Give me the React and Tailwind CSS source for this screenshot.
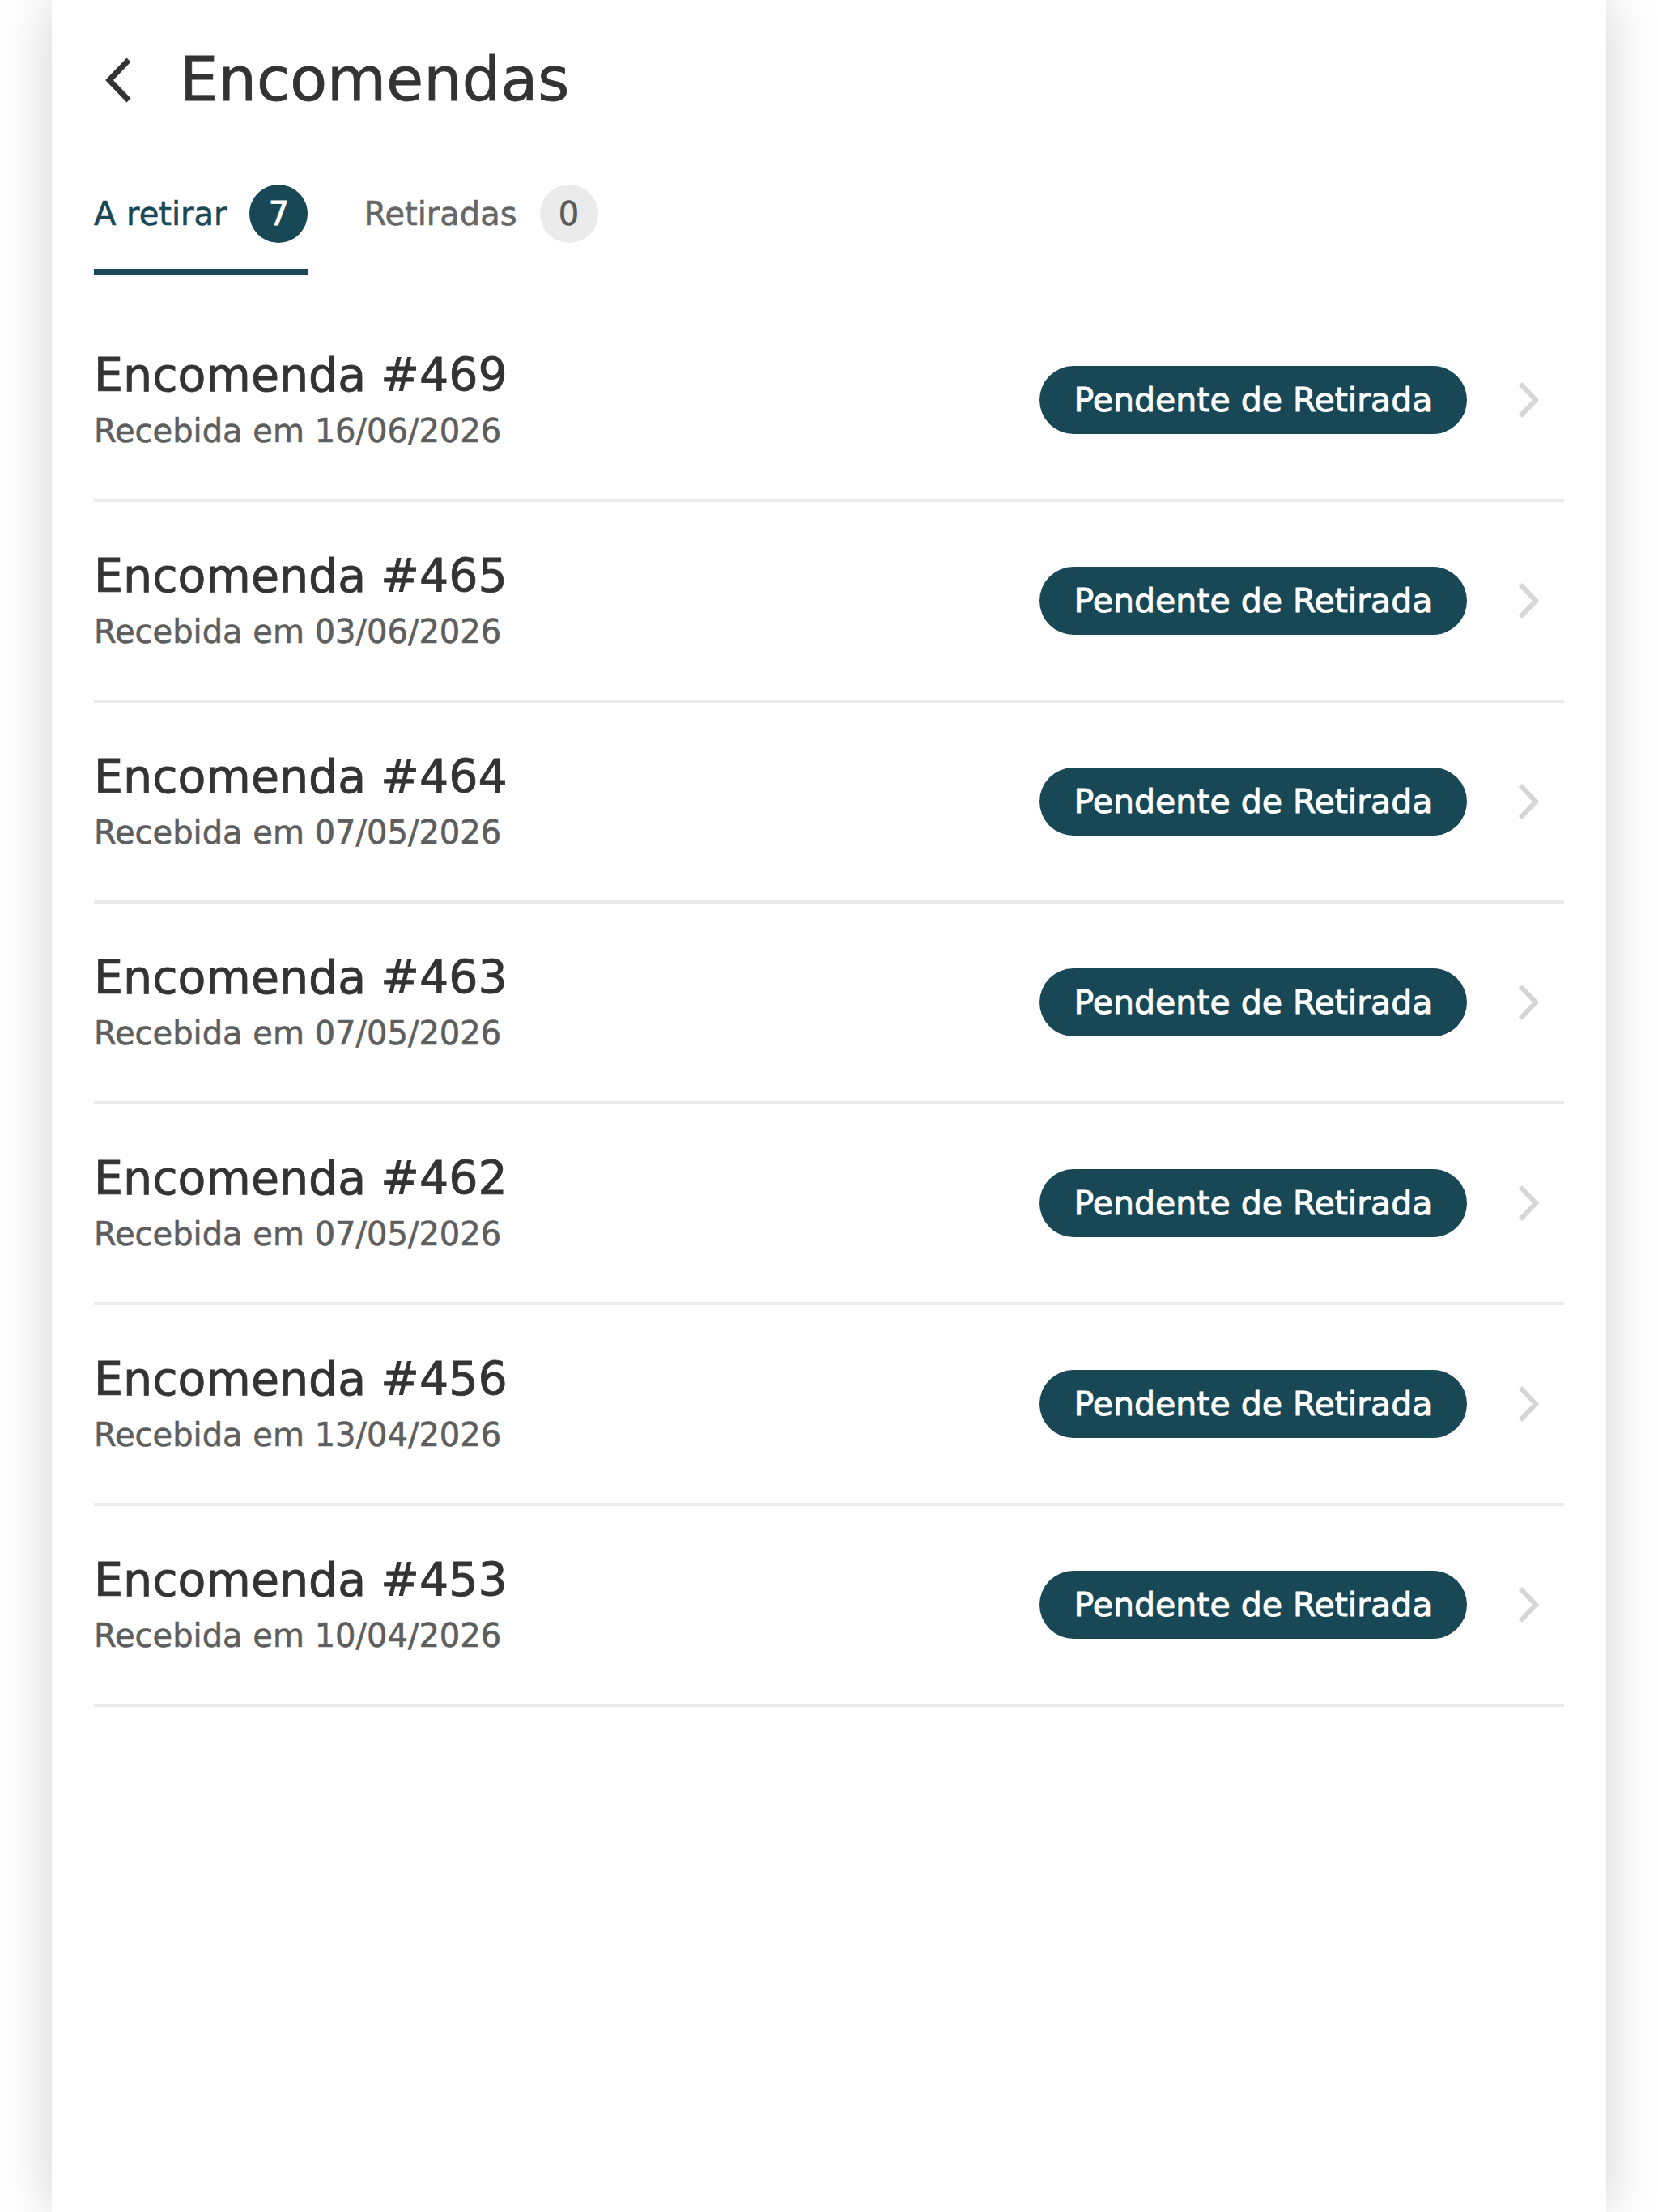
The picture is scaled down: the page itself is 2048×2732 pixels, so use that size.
import React from "react";

const orders = [
  { id: 469, date: "16/06/2026" },
  { id: 465, date: "03/06/2026" },
  { id: 464, date: "07/05/2026" },
  { id: 463, date: "07/05/2026" },
  { id: 462, date: "07/05/2026" },
  { id: 456, date: "13/04/2026" },
  { id: 453, date: "10/04/2026" },
];

const BackIcon = () => (
  <svg width="48" height="64" viewBox="0 0 48 64" fill="none">
    <polyline
      points="43,7 19,32 43,57"
      stroke="#333333"
      strokeWidth="7"
      strokeLinejoin="miter"
    />
  </svg>
);

const ChevronRight = () => (
  <svg width="32" height="48" viewBox="0 0 32 48" fill="none">
    <polyline
      points="6,4 25,24 6,44"
      stroke="#d6d6d6"
      strokeWidth="6"
      strokeLinejoin="miter"
    />
  </svg>
);

const OrderRow = ({ id, date }) => (
  <div className="h-[248px] flex items-center border-b-4 border-[#ebebeb]">
    <div className="flex-1 min-w-0 pb-[4px]">
      <p className="text-[57px] leading-[68px] text-[#333333] [-webkit-text-stroke:0.8px_#333333]">
        Encomenda #{id}
      </p>
      <p className="mt-[11px] text-[40px] leading-[48px] text-[#5e5e5e] [-webkit-text-stroke:0.6px_#5e5e5e]">
        Recebida em {date}
      </p>
    </div>
    <span className="w-[528px] h-[84px] rounded-full bg-[#184856] text-white text-[41px] leading-none flex items-center justify-center [-webkit-text-stroke:0.9px_#ffffff]">
      Pendente de Retirada
    </span>
    <div className="ml-[60px] mr-[28px] flex items-center">
      <ChevronRight />
    </div>
  </div>
);

export default function App() {
  return (
    <div className="min-h-screen bg-white font-['DejaVu_Sans',sans-serif]">
      <div className="mx-[64px] min-h-screen bg-white shadow-[0_0_64px_rgba(0,0,0,0.18)] px-[52px] pt-[62px]">
        <div className="h-[73px] flex items-center">
          <BackIcon />
          <h1 className="ml-[58px] text-[75px] leading-[73px] text-[#333333] [-webkit-text-stroke:0.8px_#333333]">
            Encomendas
          </h1>
        </div>

        <div className="mt-[93px] flex items-start">
          <div className="flex flex-col">
            <div className="flex items-center">
              <span className="text-[40px] leading-[48px] text-[#184856] [-webkit-text-stroke:0.6px_#184856]">
                A retirar
              </span>
              <span className="ml-[28px] w-[72px] h-[72px] rounded-full bg-[#184856] text-white text-[40px] leading-none flex items-center justify-center [-webkit-text-stroke:0.9px_#ffffff]">
                7
              </span>
            </div>
            <div className="mt-[32px] h-[8px] bg-[#184856]" />
          </div>
          <div className="ml-[69px] flex items-center">
            <span className="text-[40px] leading-[48px] text-[#666666] [-webkit-text-stroke:0.6px_#666666]">
              Retiradas
            </span>
            <span className="ml-[28px] w-[72px] h-[72px] rounded-full bg-[#ebebeb] text-[#5a5a5a] text-[40px] leading-none flex items-center justify-center [-webkit-text-stroke:0.6px_#5a5a5a]">
              0
            </span>
          </div>
        </div>

        <div className="mt-[32px]">
          {orders.map((o) => (
            <OrderRow key={o.id} id={o.id} date={o.date} />
          ))}
        </div>
      </div>
    </div>
  );
}
